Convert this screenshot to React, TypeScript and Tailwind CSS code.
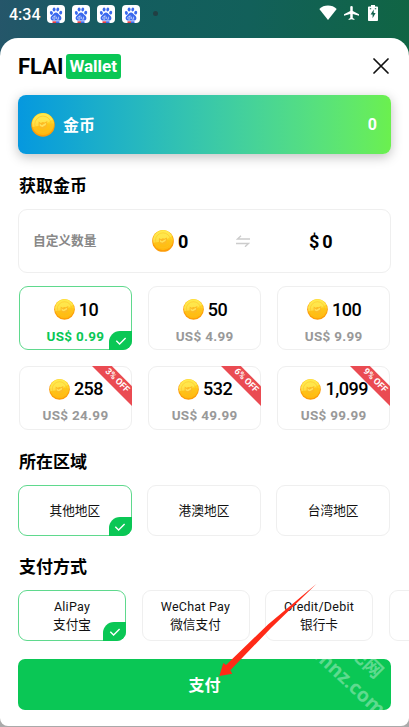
import { useState } from "react";
import clsx from "clsx";

const packs = [
  { coins: "10", price: "US$ 0.99" },
  { coins: "50", price: "US$ 4.99" },
  { coins: "100", price: "US$ 9.99" },
  { coins: "258", price: "US$ 24.99", off: "3% OFF" },
  { coins: "532", price: "US$ 49.99", off: "6% OFF" },
  { coins: "1,099", price: "US$ 99.99", off: "9% OFF" },
];

const regions = ["其他地区", "港澳地区", "台湾地区"];

const methods = [
  { name: "AliPay", label: "支付宝" },
  { name: "WeChat Pay", label: "微信支付" },
  { name: "Credit/Debit", label: "银行卡" },
  { name: "", label: "" },
];

function Coin({ className }: { className?: string }) {
  return (
    <svg viewBox="0 0 24 24" className={clsx("shrink-0", className)}>
      <defs>
        <linearGradient id="coinFace" x1="0" y1="0" x2="0" y2="1">
          <stop offset="0" stopColor="#ffe22e" />
          <stop offset="0.45" stopColor="#ffd325" />
          <stop offset="0.5" stopColor="#ffc61a" />
          <stop offset="1" stopColor="#ffb80e" />
        </linearGradient>
      </defs>
      <circle cx="12" cy="12" r="11.8" fill="#fd9c08" />
      <circle cx="12" cy="11" r="11" fill="url(#coinFace)" />
      <path d="M1.200 9.500a11 11 0 0 1 20.500-3L13 12l-6 1-5.500 1z" fill="#fff36e" opacity="0.5" />
      <circle cx="12" cy="11.300" r="8.200" fill="none" stroke="#fdc024" strokeWidth="0.6" />
      <path d="M7.600 8.600l2.200 1.500 2-1 1.600.4 3-1.400-.5 5.200c-.8 2-2.400 2.800-4.200 2.600-2.400-.2-3.900-1.500-4.100-3.400z" fill="#fdbb24" />
      <path d="M8.600 10.600l2.200 1.600 4.400-2.400-.4 2.300-3.400 1.900-2.600-1z" fill="#ffe15a" />
    </svg>
  );
}

function PawApp() {
  return (
    <svg viewBox="0 0 18 18" className="size-[18px]">
      <rect width="18" height="18" rx="4" fill="#fff" />
      <g fill="#3a68ee">
        <ellipse cx="4.4" cy="7.9" rx="1.5" ry="2" transform="rotate(-15 4.4 7.9)" />
        <ellipse cx="7.1" cy="4.4" rx="1.45" ry="2" />
        <ellipse cx="10.8" cy="4.4" rx="1.45" ry="2" transform="rotate(8 10.8 4.4)" />
        <ellipse cx="13.7" cy="7.6" rx="1.5" ry="1.9" transform="rotate(12 13.7 7.6)" />
        <path d="M9 7.600c1.600 0 2.200 1.200 3.200 2.200 1.200 1.100 2.400 1.900 2.200 3.600-.2 1.600-1.400 2.200-2.800 2.200-1 0-1.800-.2-2.600-.2s-1.600.2-2.600.2c-1.500 0-2.700-.8-2.800-2.300-.1-1.600 1.100-2.300 2.200-3.500.9-1 1.600-2.200 3.200-2.200z" />
      </g>
      <path d="M8 10.200v4H6.900a1.200 1.200 0 0 1 0-2.500H8M9.600 11.700v1.700c0 .5.300.8.800.8h1.200v-2.500" fill="none" stroke="#fff" strokeWidth="0.6" />
      <path d="M5.500 16.300H9V18H5.500z" fill="#e23b43" />
      <path d="M9 16.300h3.500V18H9z" fill="#3a68ee" />
    </svg>
  );
}

function StatusBar() {
  return (
    <div className="flex h-[37px] items-start pl-[9px] pr-[31px] pt-[5px]">
      <span className="w-[38px] text-[16px] font-medium leading-[19px] text-white">4:34</span>
      <div className="flex gap-[7px]">
        <PawApp />
        <PawApp />
        <PawApp />
        <PawApp />
      </div>
      <span className="ml-[13px] mt-[6px] size-[5px] rounded-full bg-[#213f43]" />
      <div className="ml-auto flex items-start text-white">
        <svg viewBox="0 0 18 15" className="h-[15px] w-[18px]" fill="currentColor">
          <path d="M9 15L.3 3.900C2.700 1.700 5.600.5 9 .5s6.300 1.200 8.700 3.400z" />
        </svg>
        <svg viewBox="3 2 18 20" className="ml-[7px] mt-[1px] h-[14px] w-[15px]" preserveAspectRatio="none" fill="currentColor">
          <path d="M21 16v-2l-8-5V3.500a1.500 1.500 0 0 0-3 0V9l-8 5v2l8-2.500V19l-2 1.500V22l3.500-1 3.500 1v-1.500L13 19v-5.500z" transform="translate(.5 0)" />
        </svg>
        <svg viewBox="0 0 10 16" className="ml-[9px] h-4 w-[10px]" fill="currentColor">
          <path d="M3 0h4v1.500h2.200c.4 0 .8.300.8.800v13c0 .4-.4.700-.8.700H.8c-.4 0-.8-.3-.8-.7v-13c0-.5.400-.8.800-.8H3z" />
          <path d="M5.700 4.500L2.600 9.400h2v3.800l3-5.100H5.700zM1.800 3.200h1.400v1H1.800zM6.800 3.200h1.400v1H6.800z" fill="#12614e" />
        </svg>
      </div>
    </div>
  );
}

function CheckCorner() {
  return (
    <span className="absolute -bottom-px -right-px flex h-[19px] w-[23px] items-center justify-center rounded-br-[9px] rounded-tl-[11px] bg-[#0ac755]">
      <svg viewBox="0 0 12 8" className="h-2 w-3" fill="none" stroke="#fff" strokeWidth="1.400">
        <path d="M1.300 3.800L4.600 7l6-6" />
      </svg>
    </span>
  );
}

function Option({ active, onClick, className, children }: {
  active: boolean;
  onClick: () => void;
  className?: string;
  children: React.ReactNode;
}) {
  return (
    <button
      onClick={onClick}
      className={clsx(
        "relative flex flex-col items-center rounded-[9px] border bg-white",
        active ? "border-[#5fd98d]" : "border-[#efefef]",
        className
      )}
    >
      {children}
      {active && <CheckCorner />}
    </button>
  );
}

function Title({ children }: { children: React.ReactNode }) {
  return <h2 className="pl-px text-[17px] font-bold leading-6 text-black">{children}</h2>;
}

export default function App() {
  const [pack, setPack] = useState(0);
  const [region, setRegion] = useState(0);
  const [method, setMethod] = useState(0);

  return (
    <main className="relative h-[727px] w-[409px] overflow-hidden bg-[#aaa] font-[Roboto,'Noto_Sans_CJK_SC',sans-serif]">
      <div className="h-[70px] bg-[linear-gradient(97deg,#25566a_0%,#145d60_28%,#12605a_60%,#106543_100%)]">
        <StatusBar />
      </div>
      <section className="-mt-[32.500px] h-[688.500px] rounded-b-[8px] rounded-t-[18px] bg-white px-[18px]">
        <header className="flex items-center justify-between pt-[15.500px]">
          <div className="flex items-center">
            <span className="w-12 pt-px text-[22px] font-bold leading-[25px] text-black">FLAI</span>
            <span className="flex h-[25px] w-[54.500px] items-center justify-center rounded-[3px] bg-[#0ac755] pt-px text-[17px] font-bold text-white">
              Wallet
            </span>
          </div>
          <svg viewBox="0 0 16 16" className="mr-[2px] size-4" fill="none" stroke="#111" strokeWidth="1.700" strokeLinecap="round">
            <path d="M1 1l14 14M15 1L1 15" />
          </svg>
        </header>

        <div className="mt-4 flex h-[59px] items-center rounded-[8px] bg-linear-to-r from-[#0698df] to-[#6bf04e] pl-[13px] pr-[14px] text-white shadow-[0_3px_12px_rgba(0,0,0,0.25)]">
          <Coin className="size-6" />
          <span className="ml-2 mt-[2px] text-[16px] font-bold">金币</span>
          <span className="ml-auto mt-px text-[16px] font-bold">0</span>
        </div>

        <div className="mt-5">
          <Title>获取金币</Title>
        </div>
        <div className="mt-[11px] flex h-16 items-center rounded-[9px] border border-[#efefef] pl-[14px] text-[18px] font-bold text-black">
          <span className="w-[119px] text-[12.700px] font-bold text-[#888]">自定义数量</span>
          <Coin className="size-[22px]" />
          <span className="ml-1 w-[58px]">0</span>
          <svg viewBox="0 0 14 12" className="h-3 w-[14px]" fill="none" stroke="#ccc" strokeWidth="1.300">
            <path d="M14 4H1.500L5 .7M0 8.500h12.500L9 11.800" />
          </svg>
          <span className="ml-[59px]">$</span>
          <span className="ml-[3px]">0</span>
        </div>

        <div className="mt-[13px] grid grid-cols-3 gap-x-[15.500px] gap-y-[15.500px] pl-[0.700px] pr-[0.500px]">
          {packs.map((p, i) => (
            <Option key={p.coins} active={pack === i} onClick={() => setPack(i)} className="h-16 pt-[11.500px]">
              <span className="flex items-center gap-1 pl-px text-[18px] font-medium leading-[22px] tracking-[-0.5px] text-black">
                <Coin className="size-[21px]" />
                {p.coins}
              </span>
              <span
                className={clsx(
                  "mt-[7px] text-[13.500px] font-bold leading-4 tracking-[0.3px]",
                  pack === i ? "text-[#0ac755]" : "text-[#999]"
                )}
              >
                {p.price}
              </span>
              {p.off && (
                <span className="absolute -right-px -top-px size-[41px] overflow-hidden">
                  <span className="absolute -right-[21px] top-[8px] w-[72px] rotate-45 bg-[#ea4b52] text-center text-[9px] font-bold leading-[13.500px] text-white">
                    {p.off}
                  </span>
                </span>
              )}
            </Option>
          ))}
        </div>

        <div className="mt-5">
          <Title>所在区域</Title>
        </div>
        <div className="mt-[11.500px] grid grid-cols-3 gap-[15.500px] pr-px">
          {regions.map((r, i) => (
            <Option key={r} active={region === i} onClick={() => setRegion(i)} className="h-[51px] justify-center">
              <span className="text-[12.700px] text-[#111]">{r}</span>
            </Option>
          ))}
        </div>

        <div className="mt-[19px]">
          <Title>支付方式</Title>
        </div>
        <div className="-mr-[18px] mt-[11px] flex gap-[15.500px] overflow-hidden">
          {methods.map((m, i) => (
            <Option key={i} active={method === i} onClick={() => setMethod(i)} className="h-[51px] w-[108px] shrink-0 pt-[7px]">
              <span className="text-[12.500px] leading-[18px] tracking-[0.25px] text-[#111]">{m.name}</span>
              <span className="text-[12.700px] leading-[18px] text-[#111]">{m.label}</span>
            </Option>
          ))}
        </div>

        <button className="relative mt-[18px] flex h-[51px] w-full items-center justify-center overflow-hidden rounded-[7px] bg-[#0ac755] pt-[3px] text-[16px] font-bold text-white">
          支付
          <span className="absolute left-[329px] top-[-9px] rotate-45 whitespace-nowrap text-[19px] leading-6 text-white/35">纪网</span>
          <span className="absolute left-[288px] top-[11px] rotate-[43deg] whitespace-nowrap font-['Open_Sans'] text-[19.500px] leading-6 text-white/35">
            mnz.com
          </span>
        </button>
      </section>

      {/* pointer towards the pay button */}
      <svg viewBox="0 0 100 96" className="pointer-events-none absolute left-[218px] top-[582px] h-24 w-[100px]" fill="#ff2a17">
        <path d="M98.600 1.700L50 42.500 8 83l-2.700-2L1.300 94l13-2.300-2-3.500L53 46z" />
      </svg>
    </main>
  );
}
